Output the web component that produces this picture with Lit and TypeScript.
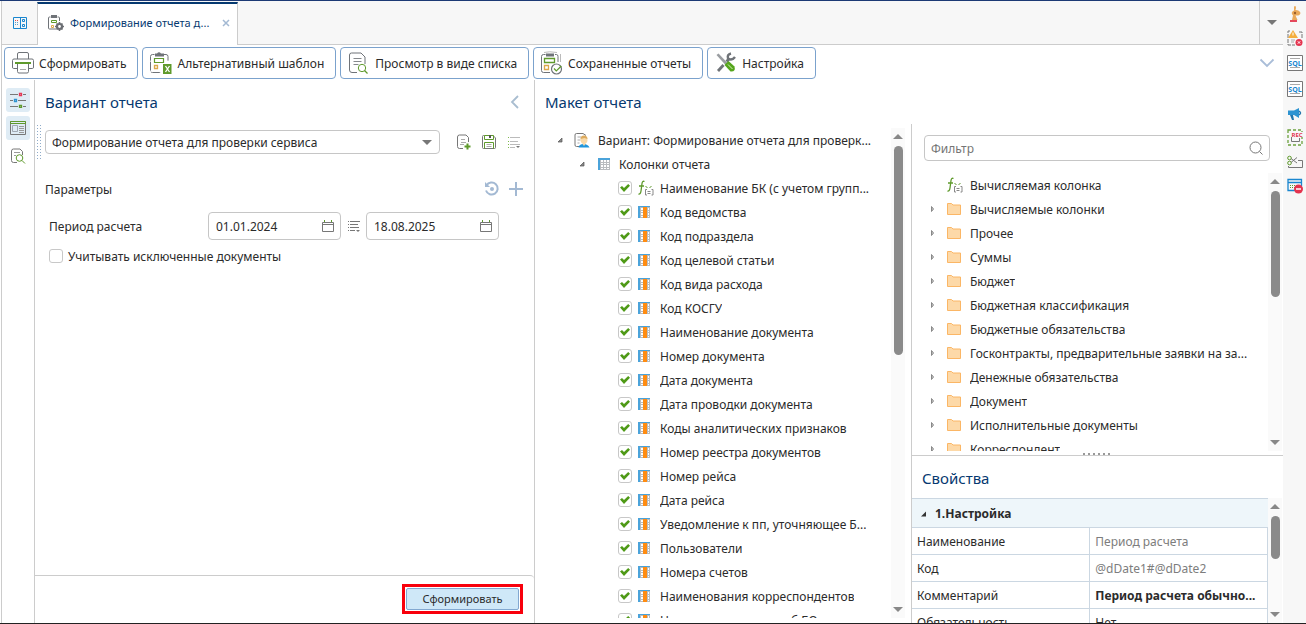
import { LitElement, html, svg, css, TemplateResult } from "lit";
import { customElement, state } from "lit/decorators.js";

const icon = (w: number, h: number, body: TemplateResult) =>
  html`<svg class="icon" width=${w} height=${h} viewBox="0 0 ${w} ${h}" fill="none" aria-hidden="true">${body}</svg>`;

const G = "#6f7378";
const GR = "#5f9a2c";

const icons = {
  dashboard: icon(16, 14, svg`
    <path d="M1.500 1.500h13v11h-13zM8.500 1.500v11" stroke="#1a86cf"/>
    <path d="M10.500 3.500h2v2h-2zM10.500 8.500h2v2h-2z" stroke="#1a86cf"/>
    <path d="M3 6.500h1M5 6.500h1M3 8.500h1M5 8.500h1" stroke="#5a9fd0"/>
    <path d="M3 4.500h1M5 4.500h1" stroke="#e0504f"/>`),
  reportGear: icon(18, 18, svg`
    <path d="M3.500 3H2.500Q1.500 3 1.500 4v10q0 1 1 1H9M10.500 3h1q1 0 1 1v3" stroke="${G}"/>
    <path d="M4 1h6v3H4z" fill="${G}"/>
    <path d="M4.500 6.500h5v2h-5z" stroke="${GR}"/>
    <path d="M4.500 11.500h2v2h-2z" stroke="#dba84a"/>
    <circle cx="12.500" cy="12.500" r="2.500" stroke="#6b6e73" stroke-width="2.200"/>
    <path d="M12.500 8v2M12.500 15v2M8 12.500h2M15 12.500h2M9.500 9.500l1 1M14.500 14.500l1 1M9.500 15.500l1-1M14.500 10.500l1-1" stroke="#6b6e73" stroke-width="1.600"/>`),
  close: icon(8, 8, svg`<path d="M1 1l6 6M7 1L1 7" stroke="#a3b9d3" stroke-width="1.500"/>`),
  printer: icon(24, 24, svg`
    <path d="M6.500 8V3q0-1.500 1.500-1.500h8q1.500 0 1.500 1.500v5" stroke="${G}"/>
    <path d="M6 17.500H2.500Q1.500 17.500 1.500 16V9.500q0-1.500 1.500-1.500h18q1.500 0 1.500 1.500V16q0 1.500-1 1.500H18" stroke="${G}"/>
    <path d="M6.500 13v7.500q0 1.500 1.500 1.500h8q1.500 0 1.500-1.500V13" stroke="${G}"/>
    <path d="M4 12h16" stroke="${GR}" stroke-width="2"/><path d="M9 18.500h6" stroke="#aaa"/>`),
  clipExcel: icon(24, 24, svg`
    <path d="M5.500 3.500H3.500Q1.500 3.500 1.500 5.500v14q0 2 2 2H12M15 3.500h2q2 0 2 2V10" stroke="${G}" stroke-dasharray="9 1"/>
    <path d="M6 2.500h2q2-2.500 4 0h3v3H6z" fill="${G}"/>
    <path d="M5.500 7.500h9v4h-9z" stroke="${GR}" stroke-width="1.200"/>
    <path d="M5.500 14.500h3v3h-3z" stroke="#dba84a" stroke-width="1.300"/>
    <path d="M14 13h8.500v10H14z" fill="${GR}"/>
    <path d="M16.500 15l4 6M20.500 15l-4 6" stroke="#fff" stroke-width="1.300"/>`),
  docSearch: icon(24, 24, svg`
    <path d="M10 21.500H5q-2.500 0-2.500-2.500V4q0-2 2-2H14l4 4v7" stroke="${G}"/>
    <path d="M6.500 7.500h8M6.500 10.500h8M6.500 13.500h5" stroke="#85888c"/>
    <circle cx="15" cy="17" r="3.700" stroke="${GR}"/><path d="M17.500 19.500l3 3" stroke="${GR}" stroke-width="1.300"/>`),
  clipCheck: icon(24, 24, svg`
    <path d="M5.500 3.500H3.500Q1.500 3.500 1.500 5.500v14q0 2 2 2H10M15 3.500h1.500q1.500 0 1.500 2V11" stroke="${G}"/>
    <path d="M4 1.500q5-1.500 13 0M20.500 3v8" stroke="#bbb"/>
    <path d="M6 2.500h8v3H6z" fill="${G}"/>
    <path d="M4.500 7.500h10v4h-10z" stroke="${GR}" stroke-width="1.300"/>
    <path d="M4.500 14.500h4v4h-4z" stroke="#dba84a" stroke-width="1.300"/>
    <circle cx="16.500" cy="18" r="5" fill="#fff" stroke="${G}" stroke-width="1.200"/>
    <path d="M14 17.500l2.300 2.500 5-5" stroke="${GR}" stroke-width="1.200"/>`),
  tools: icon(24, 24, svg`
    <path d="M9.500 14L4 20" stroke="#6f7378" stroke-width="2.800"/>
    <path d="M12.500 10.500l3-3" stroke="#6f7378" stroke-width="2.800"/>
    <path d="M17 2.500q-4 1-3 5q4 2.500 7-1.500" stroke="#6f7378" stroke-width="2.400"/>
    <path d="M2.500 4l2-1.500 9.500 10-2 2z" fill="#9a9da1"/>
    <path d="M10.500 14l4-4 6 5.500q1.500 5.500-4 5z" fill="#55a51c"/><path d="M14 13.500l4.500 4.500" stroke="#d5f0b8"/>`),
  chevDown: icon(16, 10, svg`<path d="M1.500 1.500L8 8l6.500-6.500" stroke="#a9bdd8" stroke-width="1.800"/>`),
  chevLeft: icon(10, 14, svg`<path d="M8 1L2 7l6 6" stroke="#a9bdd0" stroke-width="1.800"/>`),
  sliders: icon(16, 16, svg`
    <path d="M0 2.500h8M13 2.500h3M0 8.500h3M8 8.500h8M0 14.500h8M13 14.500h3" stroke="#777"/>
    <path d="M9.500 1.500h2v2h-2z" stroke="#e63956" stroke-width="1.300"/><path d="M4.500 7.500h2v2h-2z" stroke="#2d93d1" stroke-width="1.300"/><path d="M9.500 13.500h2v2h-2z" stroke="${GR}" stroke-width="1.300"/>`),
  layout: icon(16, 16, svg`
    <path d="M.5 1.500h15v13H.5z" stroke="#777"/><path d="M.5 1.500h15v2H.5z" stroke="${GR}"/>
    <path d="M2.500 5.500h5v6h-5z" stroke="#a0a8b2"/><path d="M9 6.500h5M9 8.500h5M9 10.500h5M9 12.500h5" stroke="#999"/>`),
  pageSearch: icon(16, 18, svg`
    <path d="M7 15.500H3.500q-2 0-2-2V4q0-2 2-2H10l2.500 2.500V8" stroke="#777"/>
    <path d="M4 5.500h6M4 8.500h2" stroke="#999"/><circle cx="9.500" cy="11" r="3.300" stroke="${GR}"/><path d="M12 13.500l3 3" stroke="${GR}"/>`),
  pageAdd: icon(16, 18, svg`
    <path d="M7 15.500H3.500q-2 0-2-2V4q0-2 2-2H10l2.500 2.500V9" stroke="#777"/>
    <path d="M5 6.500h4M5 9.500h5M4 11.500h4" stroke="#aaa"/><path d="M11.500 10.500v6M8.500 13.500h6" stroke="${GR}" stroke-width="2"/>`),
  save: icon(16, 16, svg`
    <path d="M3.500 1.500H2.500q-1 0-1 1v11q0 1 1 1h11q1 0 1-1V4L12 1.500" stroke="#777"/>
    <path d="M3.500 1.500v4h9v-4zM3.500 14.500V8.500h9v6" stroke="${GR}"/><path d="M8 1h2v3H8z" fill="#555"/><path d="M5.500 10.500h5M5.500 12.500h5" stroke="#aaa"/>`),
  menu: icon(14, 14, svg`
    <path d="M1 2.500h1M1 6.500h1M1 9.500h1M1 12.500h1" stroke="#7fb84e"/><path d="M3 2.500h10M3 6.500h8M3 9.500h10M3 12.500h5" stroke="#bbb"/><path d="M9 11h4l-2 2z" fill="#777"/>`),
  menuDark: icon(14, 14, svg`
    <path d="M1 2.500h1M1 5.500h1M1 8.500h1M1 11.500h1" stroke="#777"/><path d="M3 2.500h10M3 5.500h8M3 8.500h9M3 11.500h5" stroke="#777"/><path d="M9 11h4l-2 2z" fill="#777"/>`),
  reset: icon(16, 16, svg`
    <path d="M2.500 4.500A6 6 0 1 1 2 9.500" stroke="#a3b9d3" stroke-width="2"/><path d="M1 1v5h5z" fill="#a3b9d3"/><circle cx="8" cy="8" r="2" fill="#a3b9d3"/>`),
  plus: icon(16, 16, svg`<path d="M8 1v14M1 8h14" stroke="#a3b9d3" stroke-width="2"/>`),
  calendar: icon(14, 14, svg`
    <path d="M1.500 3.500h11v9h-11zM1.500 5.500h11" stroke="#777"/><path d="M3.500 1v2M10.500 1v2" stroke="${GR}"/>`),
  search: icon(16, 16, svg`<circle cx="7.500" cy="7.500" r="5.500" stroke="#777"/><path d="M11.500 11.500l3 3" stroke="#777"/>`),
  treeArrow: icon(8, 8, svg`<path d="M5 2v4H1z" fill="#888" stroke="#555" stroke-width=".7"/>`),
  openArrow: icon(8, 8, svg`<path d="M6 1.500v5H1z" fill="#333"/>`),
  closedArrow: icon(8, 8, svg`<path d="M2.500 1.500l2 2.500-2 2.500z" fill="#ccc" stroke="#888"/>`),
  variant: icon(16, 16, svg`
    <path d="M5 14.500H2.500Q1 14.500 1 13V3q0-1.500 1.500-1.500H9l3 2" stroke="#777"/><path d="M3.500 5h4M3.500 8h3M3.500 11h2" stroke="#aaa"/>
    <path d="M4.500 15.500q.5-3.500 5-3.500t6 3.500z" fill="#1f95db"/><circle cx="10" cy="8" r="3.500" fill="#f8d9a8"/><path d="M6.500 7q0-3.500 3.500-3.500T13.500 7l-3-1z" fill="#dcaa5e"/><path d="M8 11h4l-2 3z" fill="#f8d9a8"/>`),
  columns: icon(12, 12, svg`
    <path d="M0 0h12v12H0z" fill="#b9bcbf"/><path d="M0 0h12v2H0zM0 0h2v12H0z" fill="#4ba3da"/>
    <path d="M3 2h2v2H3zM6 2h2v2H6zM9 2h2v2H9zM3 5h2v1H3zM6 5h2v1H6zM9 5h2v1H9zM3 7h2v2H3zM6 7h2v2H6zM9 7h2v2H9zM3 10h2v1H3zM6 10h2v1H6zM9 10h2v1H9z" fill="#fff"/>`),
  column: icon(12, 12, svg`
    <path d="M0 0h12v12H0z" fill="#b9bcbf"/><path d="M0 0h12v1H0zM0 0h2v12H0z" fill="#4ba3da"/>
    <path d="M3 2h2v2H3zM3 5h2v1H3zM3 7h2v2H3zM3 10h2v1H3zM10 2h1v2h-1zM10 5h1v1h-1zM10 7h1v2h-1zM10 10h1v1h-1z" fill="#fff"/><path d="M5 1h4v11H5z" fill="#ff8c12"/>`),
  formula: icon(18, 18, svg`
    <path d="M7.500 2.500Q5.500 1.500 5 4.500L4 12q-.5 3.500-2.500 3M2 7h5" stroke="${GR}" stroke-width="1.300"/>
    <path d="M8.500 7.500l2 1M14.500 7.500l-2 1" stroke="${GR}"/>
    <path d="M10 10.500H8.500v5.500H10M14.500 10.500h1.500v5.500h-1.500" stroke="#888"/><path d="M10.500 12.500h3M10.500 14.500h3" stroke="#888"/>`),
  folder: icon(16, 14, svg`<path d="M1.500 1.500h4l1.500 1.500h7.500v9.500h-13z" fill="#fdd9a8" stroke="#fbb665"/>`),
};

const railIcons: [string, TemplateResult][] = [
  ["Помощник", icon(16, 18, svg`<path d="M7 1.500q2-1.500 2 1.500l-.5 2q4 0 5 3-.500 3-5 2.500l2 4.500H5l1-4.500q-3-3 1-5z" fill="#eaa95a"/><circle cx="8" cy="8" r="1.200" fill="#9a5f2a"/><path d="M3 16h7" stroke="#e4485c" stroke-width="2"/>`)],
  ["Ошибки", icon(16, 18, svg`<path d="M3 2H1v14h7M12 3h3v6" stroke="#777" stroke-dasharray="4 1"/><path d="M6 1l5 8H1z" fill="#f4ad3d"/><path d="M6 3.500v3" stroke="#fff"/><path d="M4 11h4M4 13h3" stroke="#aaa"/><circle cx="12" cy="13.500" r="3.500" fill="#e4344f"/><path d="M10.800 12.300l2.400 2.400M13.200 12.300l-2.400 2.400" stroke="#fff"/>`)],
  ["SQL", icon(16, 16, svg`<path d="M.5.5h15v15H.5z" fill="#fff" stroke="#777"/><path d="M3 3.500h10M3 12.500h10" stroke="#aaa"/><text x="8" y="11" class="sql">SQL</text>`)],
  ["SQL-монитор", icon(16, 16, svg`<path d="M.5.5h15v15H.5z" fill="#fff" stroke="#777"/><path d="M3 3.500h10M3 12.500h10" stroke="#aaa"/><text x="8" y="11" class="sql">SQL</text>`)],
  ["Сообщения", icon(16, 16, svg`<path d="M1 4.500h6L12 2v10l-5-3H1z" fill="#2d93d1"/><path d="M3 9h3l1 5H5z" fill="#2376ac"/><path d="M12 5q3 2 0 4" stroke="#2376ac" stroke-width="1.500"/>`)],
  ["Запись", icon(16, 18, svg`<path d="M1 1h14v15H1z" stroke="#6da33f" stroke-width="1.300" stroke-dasharray="3 2"/><path d="M4.500 5v7.500h8V9" stroke="#777"/><path d="M4 3h12v5H4z" fill="#f7f7f7"/><text x="10" y="8" class="rec">REC</text>`)],
  ["Вырезать", icon(16, 16, svg`<circle cx="2.500" cy="4" r="1.800" stroke="${GR}"/><circle cx="2.500" cy="9" r="1.800" stroke="${GR}"/><path d="M4 4.500l6 4.500M4 8.500l6-5M11 6.500h4.500v7H1.500V12" stroke="#777"/>`)],
  ["Отключить", icon(16, 16, svg`<path d="M8 12.500H1V1.500h13.500V8M1 4.500h13.500" stroke="#1a86cf" stroke-width="1.300"/><path d="M3 7.500h7M3 9.500h5" stroke="${GR}" stroke-dasharray="1 1"/><circle cx="11.500" cy="11" r="4.500" fill="#e4344f"/><path d="M9 11h5" stroke="#fff" stroke-width="1.500"/>`)],
];

const toolbar: [string, TemplateResult][] = [
  ["Сформировать", icons.printer],
  ["Альтернативный шаблон", icons.clipExcel],
  ["Просмотр в виде списка", icons.docSearch],
  ["Сохраненные отчеты", icons.clipCheck],
  ["Настройка", icons.tools],
];

const columns = [
  "Наименование БК (с учетом групп...", "Код ведомства", "Код подраздела", "Код целевой статьи",
  "Код вида расхода", "Код КОСГУ", "Наименование документа", "Номер документа", "Дата документа",
  "Дата проводки документа", "Коды аналитических признаков", "Номер реестра документов", "Номер рейса",
  "Дата рейса", "Уведомление к пп, уточняющее Б...", "Пользователи", "Номера счетов",
  "Наименования корреспондентов", "Номер уведомления об БО",
];

const folders = [
  "Вычисляемые колонки", "Прочее", "Суммы", "Бюджет", "Бюджетная классификация", "Бюджетные обязательства",
  "Госконтракты, предварительные заявки на за...", "Денежные обязательства", "Документ",
  "Исполнительные документы", "Корреспондент",
];

const properties = [
  { name: "Наименование", value: "Период расчета", kind: "muted" },
  { name: "Код", value: "@dDate1#@dDate2", kind: "muted" },
  { name: "Комментарий", value: "Период расчета обычно...", kind: "strong" },
  { name: "Обязательность", value: "Нет", kind: "" },
];

const scrollbar = (size: string) => html`
  <div class="scrollbar" aria-hidden="true">
    <i class="up"></i><div class="track"><div class="thumb ${size}"></div></div><i class="down"></i>
  </div>`;

@customElement("app-root")
export class AppRoot extends LitElement {
  @state() private filter = "";

  static styles = css`
    :host { display: block; height: 100vh; font: 12px/20px "Noto Sans", "Open Sans", sans-serif; color: #2b2b2b; background: #fff; }
    *, *::before, *::after { box-sizing: border-box; }
    button, input, select { font: inherit; color: inherit; }
    button { display: flex; align-items: center; justify-content: center; padding: 0; border: 0; background: none; cursor: pointer; }
    h2, h3, ul { margin: 0; padding: 0; font-weight: 400; list-style: none; }
    h2 { font-size: 15px; line-height: 20px; color: #063970; }
    h3 { font-size: 12px; }
    h3, .row span, .tool span, .flag span, .name { padding-top: 2px; }
    .icon { display: block; flex: none; }
    .sql, .rec { font: 700 7px "Open Sans", sans-serif; fill: #1a86cf; text-anchor: middle; }
    .rec { fill: #e4344f; font-size: 6px; }
    .shell { display: flex; height: 100%; border-top: 1px solid #1c3a75; border-bottom: 1px solid #222; overflow: hidden; }
    .main { flex: 1; min-width: 0; display: flex; flex-direction: column; margin-left: 1px; border-left: 1px solid #ccc; }
    .rail { width: 23px; flex: none; display: flex; flex-direction: column; align-items: center; padding-top: 1px; background: #f7f7f7; }
    .rail button { width: 20px; height: 24px; }
    .rail button:nth-child(3), .rail button:nth-child(4) { height: 26px; }

    .tabs { display: flex; height: 44px; flex: none; background: #f7f7f7; }
    .tab-home { width: 35px; border-bottom: 1px solid #ccc; }
    .tab { display: flex; align-items: center; gap: 5px; width: 201px; padding: 0 7px 4px 9px; border: 1px solid #ccc; border-top: 2px solid #063970; border-bottom: 0; margin-top: 1px; background: #fff; color: #063970; font-size: 11px; }
    .tab-name { flex: 1; min-width: 0; white-space: nowrap; overflow: hidden; text-overflow: ellipsis; }
    .close { width: 8px; height: 16px; }
    .tab-space { flex: 1; border-bottom: 1px solid #ccc; }
    .tab-more { width: 24px; border-left: 1px solid #ccc; border-bottom: 1px solid #ccc; }
    .caret { width: 0; height: 0; border: 5px solid transparent; border-top-color: #777; border-bottom: 0; }

    .toolbar { display: flex; align-items: center; gap: 4px; flex: none; height: 35px; padding: 0 8px 0 2px; }
    .toolbar .tool { gap: 4px; height: 32px; padding: 0 11px 0 6px; border: 1px solid #7ba2cd; border-radius: 4px; background: #fff; white-space: nowrap; }
    .expand { margin-left: auto; width: 16px; height: 24px; }

    .body { flex: 1; min-height: 0; display: flex; }
    .side { width: 33px; flex: none; display: flex; flex-direction: column; gap: 4px; padding: 8px 5px 0 4px; border-right: 1px solid #ccc; }
    .side button { width: 24px; height: 24px; border-radius: 3px; }
    .side .on { background: #dfecf5; }

    .params { flex: 0 1 500px; min-width: 0; display: flex; flex-direction: column; border-right: 1px solid #ccc; }
    .params-head { display: flex; align-items: center; justify-content: space-between; height: 44px; padding: 0 14px 0 10px; }
    .combo-row { display: flex; align-items: center; height: 36px; }
    .grip { width: 6px; height: 36px; margin: 0 3px 0 1px; background: radial-gradient(circle, #8fabc9 1px, transparent 1px) 0 0 / 3px 3px; }
    .combo { flex: 1; min-width: 0; display: grid; }
    .combo select { grid-area: 1 / 1; width: 100%; height: 24px; padding: 2px 24px 0 6px; appearance: none; border: 1px solid #c6c6c6; border-radius: 4px; background: #fff; }
    .combo .caret { grid-area: 1 / 1; justify-self: end; align-self: center; margin-right: 8px; pointer-events: none; }
    .combo-tools { display: flex; gap: 1px; padding: 0 8px 0 12px; }
    .combo-tools button { width: 24px; height: 24px; }
    .group-head { display: flex; align-items: center; height: 36px; margin-top: 11px; padding: 0 6px 0 10px; }
    .group-head h3 { flex: 1; }
    .group-head button { width: 24px; height: 24px; }
    .period { display: flex; align-items: center; height: 28px; margin-top: 5px; padding: 0 35px 0 14px; }
    .period .name { flex: 1; }
    .date { display: flex; align-items: center; width: 133px; height: 28px; padding: 0 5px 0 7px; border: 1px solid #c6c6c6; border-radius: 4px; }
    .date input { flex: 1; min-width: 0; padding: 2px 0 0; border: 0; outline: 0; background: none; }
    .period .range { width: 25px; height: 24px; }
    .flag { display: flex; align-items: center; gap: 5px; height: 20px; margin-top: 6px; padding-left: 14px; }
    .check { display: grid; place-items: center; flex: none; width: 14px; height: 14px; margin: 0; appearance: none; border: 1px solid #c8c8c8; border-radius: 3px; background: #fff; }
    .check:checked::before { content: ""; width: 10px; height: 10px; background: #4f9a17; clip-path: polygon(0 45%, 20% 30%, 40% 50%, 82% 10%, 100% 28%, 40% 90%); }
    .params-foot { display: flex; justify-content: flex-end; margin-top: auto; padding: 8px 11px 9px; border-top: 1px solid #ccc; border-radius: 0 4px 4px 0; }
    .accent { padding: 1px; border: 3px solid #f8000c; }
    .submit { width: 113px; height: 22px; border: 1px solid #82a8d1; border-radius: 2px; background: #cfe8f8; font-size: 11px; }

    .maket { flex: 1; min-width: 0; display: flex; flex-direction: column; }
    .maket-head { display: flex; align-items: center; height: 44px; padding-left: 10px; }
    .maket-body { flex: 1; min-height: 0; display: flex; }
    .tree-pane { flex: 1; min-width: 0; display: flex; padding: 4px 6px 5px 0; }
    .tree, .catalog { flex: 1; min-width: 0; overflow: hidden; }
    .tree { padding-right: 12px; }
    .row { display: flex; align-items: center; height: 24px; }
    .row span { min-width: 0; white-space: nowrap; overflow: hidden; text-overflow: ellipsis; }
    .root { padding-left: 22px; gap: 8px; }
    .branch { padding-left: 44px; gap: 9px; }
    .branch .icon:first-child { margin-right: 2px; }
    .root .icon:first-child { margin-right: 1px; }
    .leaf { padding-left: 83px; gap: 5px; }
    .slot { display: grid; place-items: center; width: 14px; height: 18px; margin-right: 4px; flex: none; }

    .scrollbar { display: flex; flex-direction: column; align-items: center; width: 14px; flex: none; padding: 6px 0; background: #fafafa; }
    .scrollbar i { width: 0; height: 0; border: 5px solid transparent; }
    .scrollbar .up { border-top: 0; border-bottom-color: #888; }
    .scrollbar .down { border-bottom: 0; border-top-color: #888; }
    .track { flex: 1; width: 9px; padding: 7px 0; }
    .thumb { border-radius: 5px; background: #8a8a8a; }
    .thumb.tall { height: 46%; }
    .thumb.mid { height: 44%; }
    .thumb.low { height: 48%; }

    .right { flex: 0 1 372px; min-width: 0; display: flex; flex-direction: column; border-left: 1px solid #ccc; }
    .search { display: flex; align-items: center; flex: none; height: 26px; margin: 11px 13px 12px 12px; padding: 0 5px 0 6px; border: 1px solid #c6c6c6; border-radius: 4px; }
    .search input { flex: 1; min-width: 0; padding: 2px 0 0; border: 0; outline: 0; background: none; }
    .search input::placeholder { color: #757575; }
    .catalog-pane { flex: 1; min-height: 0; display: flex; padding: 0 1px 2px 0; }
    .catalog { padding-right: 14px; }
    .item { padding-left: 17px; }
    .item > .icon { margin-right: 9px; }
    .item .folder, .item .slot { display: grid; place-items: center; width: 16px; margin-right: 8px; flex: none; }
    .indent { width: 17px; flex: none; }
    .props { flex: 0 0 168px; display: flex; flex-direction: column; border-top: 1px solid #ccc; overflow: hidden; }
    .splitter { flex: none; align-self: center; width: 30px; height: 2px; background: repeating-linear-gradient(90deg, #999 0 2px, transparent 2px 5px); }
    .props-head { display: flex; align-items: center; flex: none; height: 42px; padding: 2px 0 0 10px; }
    .props-body { flex: 1; min-height: 0; display: flex; padding-right: 1px; }
    .table-wrap { flex: 1; min-width: 0; overflow: hidden; }
    table { width: 100%; table-layout: fixed; border-collapse: collapse; }
    th, td { height: 27px; padding: 2px 5px 0; border: 1px solid #cbd7e2; border-left: 0; text-align: left; font-weight: 400; white-space: nowrap; overflow: hidden; text-overflow: ellipsis; line-height: 20px; }
    thead th { height: 29px; padding: 2px 8px 0; background: #eef6fa; border-right: 0; font-weight: 700; }
    thead div { display: flex; align-items: center; gap: 7px; }
    .muted { color: #7d7d7d; }
    .strong { font-weight: 700; }
  `;

  private onFilter(e: Event) {
    this.filter = (e.target as HTMLInputElement).value;
  }

  private renderParams() {
    return html`
      <section class="params">
        <div class="params-head"><h2>Вариант отчета</h2><button aria-label="Свернуть">${icons.chevLeft}</button></div>
        <div class="combo-row">
          <div class="grip"></div>
          <div class="combo">
            <select aria-label="Вариант отчета"><option>Формирование отчета для проверки сервиса</option></select>
            <i class="caret"></i>
          </div>
          <div class="combo-tools">
            <button aria-label="Создать">${icons.pageAdd}</button>
            <button aria-label="Сохранить">${icons.save}</button>
            <button aria-label="Меню">${icons.menu}</button>
          </div>
        </div>
        <div class="group-head">
          <h3>Параметры</h3>
          <button aria-label="Сбросить">${icons.reset}</button><button aria-label="Добавить">${icons.plus}</button>
        </div>
        <div class="period">
          <label class="name" for="from">Период расчета</label>
          <div class="date"><input id="from" value="01.01.2024">${icons.calendar}</div>
          <button class="range" aria-label="Выбрать период">${icons.menuDark}</button>
          <div class="date"><input aria-label="Конец периода" value="18.08.2025">${icons.calendar}</div>
        </div>
        <label class="flag"><input class="check" type="checkbox"><span>Учитывать исключенные документы</span></label>
        <div class="params-foot"><div class="accent"><button class="submit">Сформировать</button></div></div>
      </section>`;
  }

  private renderTree() {
    return html`
      <div class="tree-pane">
        <ul class="tree">
          <li class="row root">${icons.treeArrow}${icons.variant}<span>Вариант: Формирование отчета для проверк...</span></li>
          <li class="row branch">${icons.treeArrow}${icons.columns}<span>Колонки отчета</span></li>
          ${columns.map((name, i) => html`
            <li><label class="row leaf">
              <input class="check" type="checkbox" checked>
              <div class="slot">${i === 0 ? icons.formula : icons.column}</div><span>${name}</span>
            </label></li>`)}
        </ul>
        ${scrollbar("tall")}
      </div>`;
  }

  private renderRight() {
    const shown = folders.filter((f) => f.toLowerCase().includes(this.filter.toLowerCase()));
    return html`
      <div class="right">
        <div class="search"><input aria-label="Фильтр" placeholder="Фильтр" @input=${this.onFilter}>${icons.search}</div>
        <div class="catalog-pane">
          <ul class="catalog">
            <li class="row item"><div class="indent"></div><div class="slot">${icons.formula}</div><span>Вычисляемая колонка</span></li>
            ${shown.map((name) => html`<li class="row item">${icons.closedArrow}<div class="folder">${icons.folder}</div><span>${name}</span></li>`)}
          </ul>
          ${scrollbar("mid")}
        </div>
        <div class="splitter"></div>
        <section class="props">
          <div class="props-head"><h2>Свойства</h2></div>
          <div class="props-body">
            <div class="table-wrap">
              <table>
                <thead><tr><th colspan="2"><div>${icons.openArrow}1.Настройка</div></th></tr></thead>
                <tbody>
                  ${properties.map((p) => html`<tr><th scope="row">${p.name}</th><td class=${p.kind}>${p.value}</td></tr>`)}
                </tbody>
              </table>
            </div>
            ${scrollbar("low")}
          </div>
        </section>
      </div>`;
  }

  render() {
    return html`
      <div class="shell">
        <main class="main">
          <nav class="tabs">
            <button class="tab-home" aria-label="Навигатор">${icons.dashboard}</button>
            <div class="tab">${icons.reportGear}<span class="tab-name">Формирование отчета д...</span><button class="close" aria-label="Закрыть">${icons.close}</button></div>
            <div class="tab-space"></div>
            <button class="tab-more" aria-label="Список вкладок"><i class="caret"></i></button>
          </nav>
          <div class="toolbar">
            ${toolbar.map(([name, glyph]) => html`<button class="tool">${glyph}<span>${name}</span></button>`)}
            <button class="expand" aria-label="Развернуть">${icons.chevDown}</button>
          </div>
          <div class="body">
            <div class="side">
              <button class="on" aria-label="Параметры">${icons.sliders}</button>
              <button class="on" aria-label="Макет">${icons.layout}</button>
              <button aria-label="Просмотр">${icons.pageSearch}</button>
            </div>
            ${this.renderParams()}
            <section class="maket">
              <div class="maket-head"><h2>Макет отчета</h2></div>
              <div class="maket-body">${this.renderTree()}${this.renderRight()}</div>
            </section>
          </div>
        </main>
        <aside class="rail">${railIcons.map(([name, glyph]) => html`<button aria-label=${name}>${glyph}</button>`)}</aside>
      </div>`;
  }
}
